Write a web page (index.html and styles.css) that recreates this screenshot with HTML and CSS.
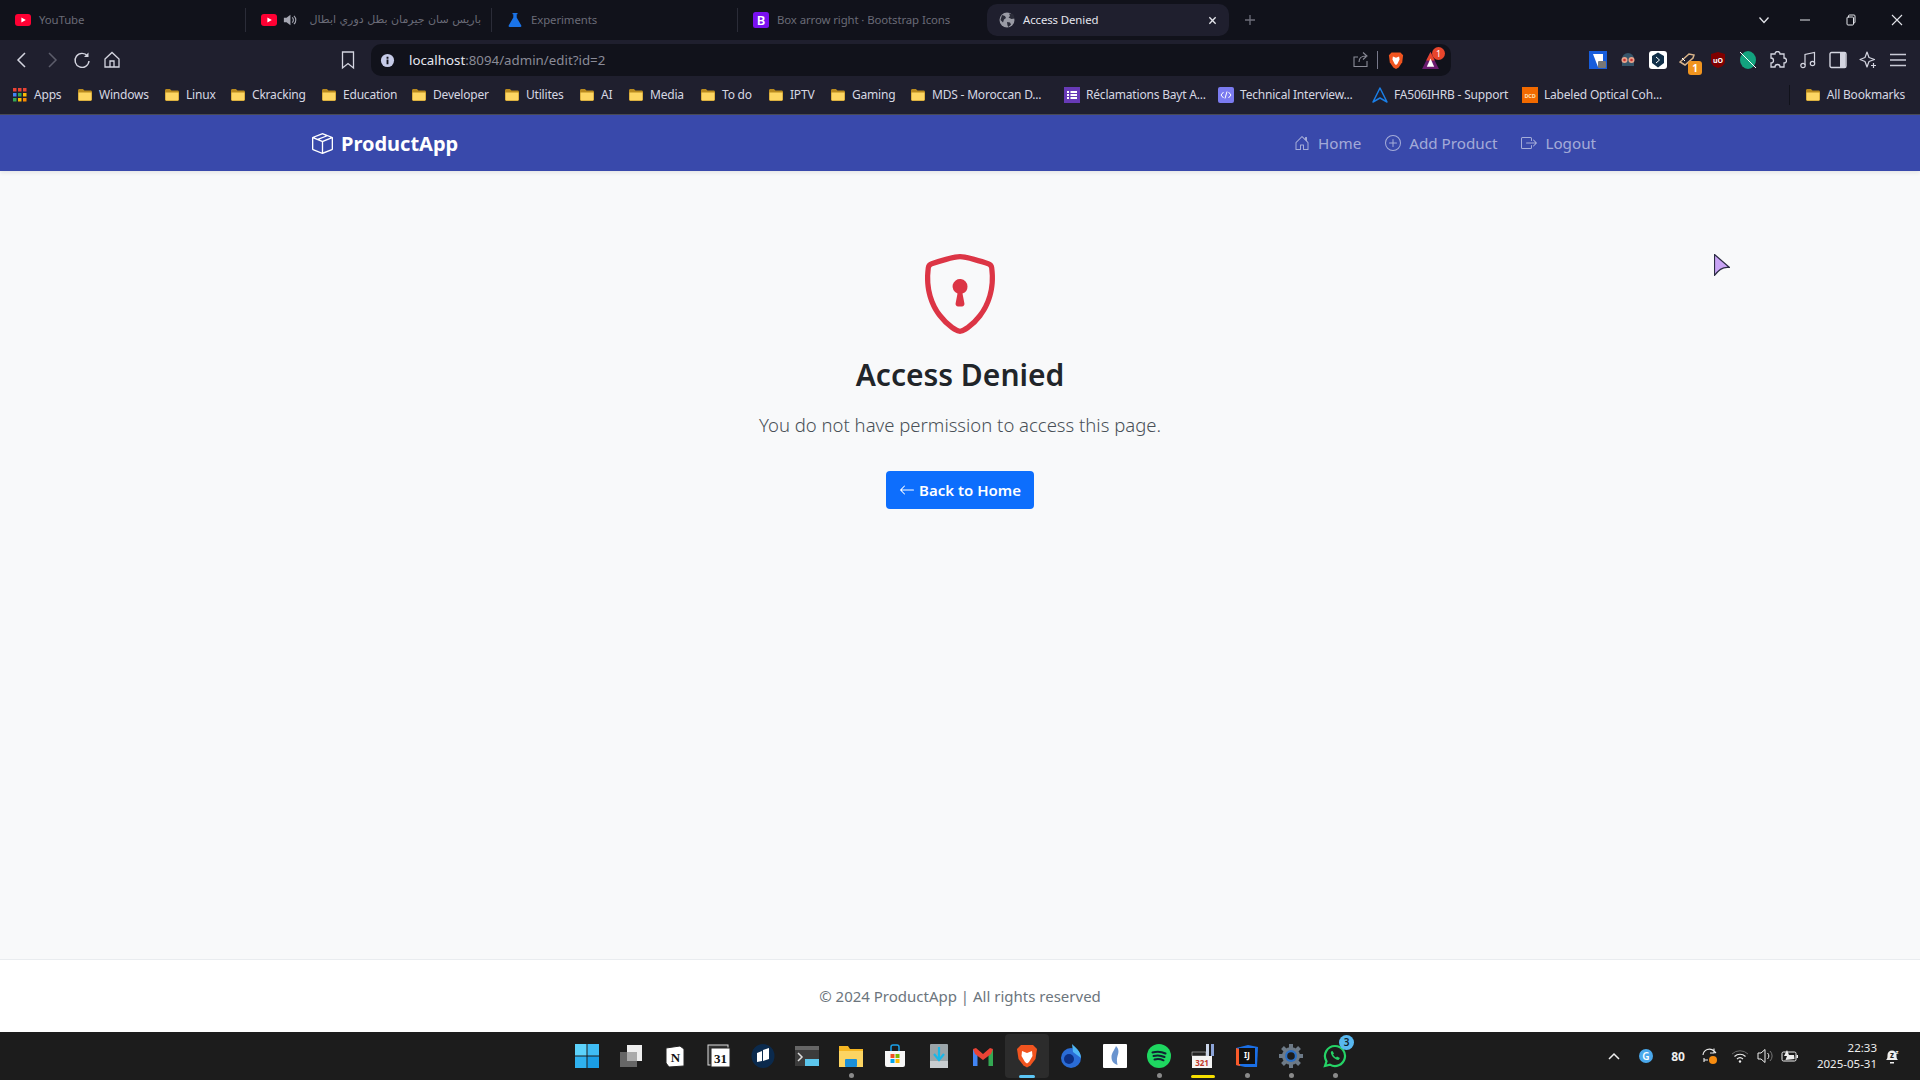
FILE: index.html
```html
<!DOCTYPE html>
<html lang="en">
<head>
    <meta charset="UTF-8">
    <title>Access Denied</title>
    <link rel="stylesheet" href="styles.css">
</head>
<body>
    <svg class="defs" width="0" height="0">
        <symbol id="folder" viewBox="0 0 16 16">
            <path d="M1 3.5C1 2.7 1.6 2 2.4 2h3.5l1.6 1.6h6.1c.8 0 1.400.7 1.400 1.400v7.600c0 .8-.6 1.400-1.400 1.400H2.400c-.8 0-1.400-.6-1.400-1.400z" fill="#b98a1e"/>
            <path d="M1.500 5.400h13v7.200c0 .6-.4 1-1 1h-11c-.6 0-1-.4-1-1z" fill="#fdd663"/>
        </symbol>
        <symbol id="yt" viewBox="0 0 16 16">
            <rect y="2" width="16" height="12" rx="3" fill="#ff0033"/>
            <path d="M6.400 5.400v5.200L10.800 8z" fill="#fff"/>
        </symbol>
    </svg>

    <!-- Browser window top -->
    <div class="tabstrip">
        <div class="tab sep"><svg class="fav"><use href="#yt"/></svg><span class="tab-title">YouTube</span></div>
        <div class="tab sep">
            <svg class="fav"><use href="#yt"/></svg>
            <svg class="speaker" viewBox="0 0 16 16"><path d="M1 5.500h3L8.500 2v12L4 10.500H1z" fill="#a5a6b2"/><path d="M10.500 5a4 4 0 0 1 0 6M12.500 3.200a6.500 6.500 0 0 1 0 9.600" stroke="#a5a6b2" stroke-width="1.300" fill="none"/></svg>
            <span class="tab-title arabic" dir="rtl">باريس سان جيرمان بطل دوري ابطال</span>
        </div>
        <div class="tab sep">
            <svg class="fav" viewBox="0 0 16 16"><path d="M5.500 1h5v1.200H9.700v3.400l4.600 8c.3.6-.1 1.400-.8 1.400H2.500c-.7 0-1.100-.8-.8-1.400l4.600-8V2.200h-.8z" fill="#1a73e8"/></svg>
            <span class="tab-title">Experiments</span>
        </div>
        <div class="tab">
            <svg class="fav" viewBox="0 0 16 16"><rect width="16" height="16" y="0" rx="2.500" fill="#7a10f0"/><text x="8" y="12.600" class="fav-letter">B</text></svg>
            <span class="tab-title">Box arrow right · Bootstrap Icons</span>
        </div>
        <div class="tab active">
            <svg class="fav" viewBox="0 0 16 16"><circle cx="8" cy="8" r="7.500" fill="#9a9ba5"/><path d="M3 3l3 1 1 2-2 1.500-1 3-2.500-2.500zM10 1.500l1 2.500-1.500 1.500 3 1.500 3-.5-1-4zM8 10l3 .5 1 2-2.500 2.500-1-1.500z" fill="#2a2b38"/></svg>
            <span class="tab-title">Access Denied</span>
            <svg class="tab-close" viewBox="0 0 10 10"><path d="M1.500 1.500l7 7M8.500 1.500l-7 7" stroke="#e3e4ea" stroke-width="1.500"/></svg>
        </div>
        <svg class="new-tab" viewBox="0 0 12 12"><path d="M6 1v10M1 6h10" stroke="#6d6e7a" stroke-width="1.300"/></svg>
        <div class="window-btns">
            <svg class="win-chevron" viewBox="0 0 12 12"><path d="M1.500 3.500L6 8.500l4.500-5" stroke="#e3e4ea" stroke-width="1.300" fill="none"/></svg>
            <svg class="win-btn" viewBox="0 0 12 12"><path d="M1 6h10" stroke="#e3e4ea" stroke-width="1"/></svg>
            <svg class="win-btn" viewBox="0 0 12 12"><path d="M3.500 3.500V2a1 1 0 0 1 1-1H9a1 1 0 0 1 1 1v6a1 1 0 0 1-1 1H8.500" stroke="#e3e4ea" fill="none"/><rect x="2" y="3" width="6.500" height="8" rx="1" stroke="#e3e4ea" fill="none"/></svg>
            <svg class="win-btn" viewBox="0 0 12 12"><path d="M1 1l10 10M11 1L1 11" stroke="#e3e4ea" stroke-width="1.100"/></svg>
        </div>
    </div>

    <div class="toolbar">
        <button class="tb-btn"><svg viewBox="0 0 20 20"><path d="M13 3l-7 7 7 7" stroke="#d4d5e0" stroke-width="1.500" fill="none"/></svg></button>
        <button class="tb-btn"><svg viewBox="0 0 20 20"><path d="M7 3l7 7-7 7" stroke="#5c5d6b" stroke-width="1.500" fill="none"/></svg></button>
        <button class="tb-btn"><svg viewBox="0 0 20 20"><path d="M15.500 6A7 7 0 1 0 17 11" stroke="#d4d5e0" stroke-width="1.400" fill="none"/><path d="M16.500 2.500V7H12z" fill="#d4d5e0"/></svg></button>
        <button class="tb-btn"><svg viewBox="0 0 20 20"><path d="M3 9l7-6.500L17 9v8H3zM8 17v-6h4v6" stroke="#d4d5e0" stroke-width="1.300" fill="none"/></svg></button>
        <svg class="bookmark-star" viewBox="0 0 16 20"><path d="M2.500 2h11v16L8 13.500 2.500 18z" stroke="#d4d5e0" stroke-width="1.300" fill="none"/></svg>
        <div class="urlbar">
            <svg class="url-info" viewBox="0 0 16 16"><circle cx="8" cy="8" r="7" fill="#c6cbe8"/><path d="M7 7h2v5H7zM7 4h2v2H7z" fill="#11121b"/></svg>
            <span class="url-host">localhost</span><span class="url-rest">:8094/admin/edit?id=2</span>
            <svg class="url-share" viewBox="0 0 18 18"><path d="M15 10v5.500H2V6h4M7 11c0-4 3-6 7-6M11 1.500L15 5l-4 3.500" stroke="#8a8b97" stroke-width="1.100" fill="none"/></svg>
            <span class="url-sep"></span>
            <svg class="url-lion" viewBox="0 0 18 20"><path d="M4 1h10l3 3-1 8-4 6-3 1.500-3-1.500-4-6L1 4z" fill="#f1541f"/><path d="M5.500 5.500L9 7l3.500-1.500L13 9l-2.500 5L9 15l-1.500-1L5 9z" fill="#fff"/></svg>
            <div class="url-rewards">
                <svg viewBox="0 0 18 18"><path d="M9 1l8 16H1z" fill="#6a1b6f"/><path d="M9 1l4 8H5z" fill="#e8452c"/><path d="M9 7l3.500 8h-7z" fill="#fff"/></svg>
                <span class="rewards-badge">1</span>
            </div>
        </div>
        <div class="extensions">
            <div class="ext"><svg viewBox="0 0 18 18"><rect width="18" height="18" fill="#175ddc"/><path d="M4 3h10v7c0 3-3 5-5 6z" fill="#fff"/><rect x="9" y="10" width="8" height="7" rx="1" fill="#777"/></svg></div>
            <div class="ext"><svg viewBox="0 0 18 18"><path d="M3 8a6 6 0 0 1 12 0v7H3z" fill="#36556a"/><circle cx="5.500" cy="9" r="3" fill="#e8a48b"/><circle cx="12.500" cy="9" r="3" fill="#e8a48b"/><circle cx="5.500" cy="9" r="1.300" fill="#c33"/><circle cx="12.500" cy="9" r="1.300" fill="#c33"/></svg></div>
            <div class="ext"><svg viewBox="0 0 18 18"><rect width="18" height="18" rx="3" fill="#fff"/><path d="M9 1.500l6 3.500v7l-6 4.500L3 12V5z" fill="#123049"/><path d="M7 6l3.500 3L7 12" stroke="#fff" fill="none"/></svg></div>
            <div class="ext"><svg viewBox="0 0 18 18"><path d="M1 11L10 3l5 1-1 3-8 7z" stroke="#d9b48a" stroke-width="1.500" fill="none"/><path d="M3 7l3 3" stroke="#fff"/></svg><span class="ext-badge">1</span></div>
            <div class="ext"><svg viewBox="0 0 18 18"><path d="M9 1l7 2v7c0 4-4 6-7 7-3-1-7-3-7-7V3z" fill="#800000"/><text x="9" y="11.500" class="ublock-text">uO</text></svg></div>
            <div class="ext"><svg viewBox="0 0 18 18"><ellipse cx="9" cy="9" rx="8" ry="9" fill="#13a37f"/><path d="M1 1l16 16" stroke="#fff"/></svg></div>
            <div class="ext"><svg viewBox="0 0 18 18"><path d="M6 3a2.500 2.500 0 0 1 5 0h4v4a2.500 2.500 0 0 1 0 5v4h-4a2.500 2.500 0 0 0-5 0H2v-4a2.500 2.500 0 0 0 0-5V3z" stroke="#d4d5e0" stroke-width="1.300" fill="none"/></svg></div>
            <div class="ext"><svg viewBox="0 0 18 18"><path d="M6 14V3.500L15.500 1.500V12" stroke="#d4d5e0" stroke-width="1.200" fill="none"/><circle cx="4" cy="14.500" r="2.200" stroke="#d4d5e0" stroke-width="1.200" fill="none"/><circle cx="13.500" cy="12.500" r="2.200" stroke="#d4d5e0" stroke-width="1.200" fill="none"/></svg></div>
            <div class="ext"><svg viewBox="0 0 18 18"><rect x="1" y="1.500" width="16" height="15" rx="1.500" stroke="#d4d5e0" stroke-width="1.400" fill="none"/><rect x="11" y="2" width="5.500" height="14" fill="#d4d5e0"/></svg></div>
            <div class="ext"><svg viewBox="0 0 18 18"><path d="M8 1l2 5.500 5.500 2L10 10.500 8 16l-2-5.500L1 8.500l5-2z" stroke="#d4d5e0" stroke-width="1.200" fill="none" stroke-linejoin="round"/><path d="M14.500 12v5M12 14.500h5" stroke="#d4d5e0" stroke-width="1.200"/></svg></div>
            <div class="ext"><svg viewBox="0 0 18 18"><path d="M1 3.500h16M1 9h16M1 14.500h16" stroke="#c9cad6" stroke-width="1.400"/></svg></div>
        </div>
    </div>

    <div class="bookmarks">
        <div class="bm">
            <svg class="bm-icon apps" viewBox="0 0 14 14"><rect width="3.500" height="3.500" fill="#ea4335"/><rect x="5" width="3.500" height="3.500" fill="#ea4335"/><rect x="10" width="3.500" height="3.500" fill="#ea4335"/><rect y="5" width="3.500" height="3.500" fill="#4285f4"/><rect x="5" y="5" width="3.500" height="3.500" fill="#34a853"/><rect x="10" y="5" width="3.500" height="3.500" fill="#fbbc05"/><rect y="10" width="3.500" height="3.500" fill="#34a853"/><rect x="5" y="10" width="3.500" height="3.500" fill="#fbbc05"/><rect x="10" y="10" width="3.500" height="3.500" fill="#fb8c00"/></svg>
            Apps
        </div>
        <div class="bm"><svg class="bm-icon"><use href="#folder"/></svg>Windows</div>
        <div class="bm"><svg class="bm-icon"><use href="#folder"/></svg>Linux</div>
        <div class="bm"><svg class="bm-icon"><use href="#folder"/></svg>Ckracking</div>
        <div class="bm"><svg class="bm-icon"><use href="#folder"/></svg>Education</div>
        <div class="bm"><svg class="bm-icon"><use href="#folder"/></svg>Developer</div>
        <div class="bm"><svg class="bm-icon"><use href="#folder"/></svg>Utilites</div>
        <div class="bm"><svg class="bm-icon"><use href="#folder"/></svg>AI</div>
        <div class="bm"><svg class="bm-icon"><use href="#folder"/></svg>Media</div>
        <div class="bm"><svg class="bm-icon"><use href="#folder"/></svg>To do</div>
        <div class="bm"><svg class="bm-icon"><use href="#folder"/></svg>IPTV</div>
        <div class="bm"><svg class="bm-icon"><use href="#folder"/></svg>Gaming</div>
        <div class="bm"><svg class="bm-icon"><use href="#folder"/></svg>MDS - Moroccan D...</div>
        <div class="bm"><svg class="bm-icon" viewBox="0 0 16 16"><rect width="16" height="16" fill="#673ab7"/><path d="M3 4h2v2H3zM6.500 4H13v2H6.500zM3 7h2v2H3zM6.500 7H13v2H6.500zM3 10h2v2H3zM6.500 10H13v2H6.500z" fill="#fff"/></svg>Réclamations Bayt A...</div>
        <div class="bm"><svg class="bm-icon" viewBox="0 0 16 16"><rect width="16" height="16" rx="2" fill="#7b7bf0"/><path d="M5.500 5L3 8l2.500 3M10.500 5L13 8l-2.500 3M9 4.500l-2 7" stroke="#fff" fill="none"/></svg>Technical Interview...</div>
        <div class="bm"><svg class="bm-icon" viewBox="0 0 16 16"><path d="M8 1L1 15l7-4 7 4z" stroke="#1a7ee6" stroke-width="1.500" fill="none" stroke-linejoin="round"/></svg>FA506IHRB - Support</div>
        <div class="bm"><svg class="bm-icon" viewBox="0 0 16 16"><rect width="16" height="16" fill="#f26a00"/><text x="8" y="10.500" class="dcd-text">DCD</text></svg>Labeled Optical Coh...</div>
        <div class="bm all-bookmarks"><svg class="bm-icon"><use href="#folder"/></svg>All Bookmarks</div>
    </div>

    <!-- Page content -->
    <nav class="navbar">
        <div class="container nav-inner">
            <a class="brand">
                <svg class="bi brand-icon" viewBox="0 0 16 16"><path d="M8.186 1.113a.5.5 0 0 0-.372 0L1.846 3.500l2.404.961L10.404 2l-2.218-.887zm3.564 1.426L5.596 5 8 5.961 14.154 3.500l-2.404-.961zm3.250 1.700-6.500 2.600v7.922l6.500-2.600V4.240zM7.500 14.762V6.838L1 4.239v7.925l6.500 2.600zM7.443.184a1.500 1.500 0 0 1 1.114 0l7.129 2.852A.5.5 0 0 1 16 3.500v8.662a1 1 0 0 1-.629.928l-7.185 2.874a.5.5 0 0 1-.372 0L.63 13.090a1 1 0 0 1-.63-.928V3.500a.5.5 0 0 1 .314-.464L7.443.184z"/></svg>
                ProductApp
            </a>
            <div class="nav-links">
                <a class="nav-link"><svg class="bi" viewBox="0 0 16 16"><path d="M8.354 1.146a.5.5 0 0 0-.708 0l-6 6A.5.5 0 0 0 1.500 7.500v7a.5.5 0 0 0 .5.5h4.500a.5.5 0 0 0 .5-.5v-4h2v4a.5.5 0 0 0 .5.5H14a.5.5 0 0 0 .5-.5v-7a.5.5 0 0 0-.146-.354L13 5.793V2.500a.5.5 0 0 0-.5-.5h-1a.5.5 0 0 0-.5.5v1.293L8.354 1.146zM2.500 14V7.707l5.500-5.500 5.500 5.500V14H10v-4a.5.5 0 0 0-.5-.5h-3a.5.5 0 0 0-.5.5v4H2.500z"/></svg>Home</a>
                <a class="nav-link"><svg class="bi" viewBox="0 0 16 16"><path d="M8 15A7 7 0 1 1 8 1a7 7 0 0 1 0 14zm0 1A8 8 0 1 0 8 0a8 8 0 0 0 0 16z"/><path d="M8 4a.5.5 0 0 1 .5.5v3h3a.5.5 0 0 1 0 1h-3v3a.5.5 0 0 1-1 0v-3h-3a.5.5 0 0 1 0-1h3v-3A.5.5 0 0 1 8 4z"/></svg>Add Product</a>
                <a class="nav-link"><svg class="bi" viewBox="0 0 16 16"><path d="M10 12.500a.5.5 0 0 1-.5.5h-8a.5.5 0 0 1-.5-.5v-9a.5.5 0 0 1 .5-.5h8a.5.5 0 0 1 .5.5v2a.5.5 0 0 0 1 0v-2A1.500 1.500 0 0 0 9.500 2h-8A1.500 1.500 0 0 0 0 3.500v9A1.500 1.500 0 0 0 1.500 14h8a1.500 1.500 0 0 0 1.500-1.500v-2a.5.5 0 0 0-1 0v2z"/><path d="M15.854 8.354a.5.5 0 0 0 0-.708l-3-3a.5.5 0 0 0-.708.708L14.293 7.500H5.500a.5.5 0 0 0 0 1h8.793l-2.147 2.146a.5.5 0 0 0 .708.708l3-3z"/></svg>Logout</a>
            </div>
        </div>
    </nav>

    <main class="main">
        <svg class="shield" viewBox="0 0 16 16"><path d="M5.338 1.590a61.440 61.440 0 0 0-2.837.856.481.481 0 0 0-.328.390c-.554 4.157.726 7.190 2.253 9.188a10.725 10.725 0 0 0 2.287 2.233c.346.244.652.420.893.533.120.057.218.095.293.118a.550.550 0 0 0 .101.025.615.615 0 0 0 .100-.025c.076-.023.174-.061.294-.118.240-.113.547-.290.893-.533a10.726 10.726 0 0 0 2.287-2.233c1.527-1.997 2.807-5.031 2.253-9.188a.480.480 0 0 0-.328-.390c-.651-.213-1.750-.560-2.837-.855C9.552 1.290 8.531 1.067 8 1.067c-.530 0-1.552.223-2.662.524zM5.072.560C6.157.265 7.310 0 8 0s1.843.265 2.928.560c1.110.300 2.229.655 2.887.870a1.540 1.540 0 0 1 1.044 1.262c.596 4.477-.787 7.795-2.465 9.990a11.775 11.775 0 0 1-2.517 2.453 7.159 7.159 0 0 1-1.048.625c-.280.132-.581.240-.829.240s-.548-.108-.829-.240a7.158 7.158 0 0 1-1.048-.625 11.777 11.777 0 0 1-2.517-2.453C1.928 10.487.545 7.169 1.141 2.692A1.540 1.540 0 0 1 2.185 1.430 62.456 62.456 0 0 1 5.072.560z"/><path d="M9.500 6.500a1.500 1.500 0 0 1-1 1.415l.385 1.990a.5.5 0 0 1-.491.595h-.788a.5.5 0 0 1-.490-.595l.384-1.990a1.500 1.500 0 1 1 2-1.415z"/></svg>
        <h1 class="title">Access Denied</h1>
        <p class="lead">You do not have permission to access this page.</p>
        <a class="btn-home"><svg class="bi" viewBox="0 0 16 16"><path d="M15 8a.5.5 0 0 0-.5-.5H2.707l3.147-3.146a.5.5 0 1 0-.708-.708l-4 4a.5.5 0 0 0 0 .708l4 4a.5.5 0 0 0 .708-.708L2.707 8.500H14.500A.5.5 0 0 0 15 8z"/></svg>Back to Home</a>
    </main>

    <footer class="footer">© 2024 ProductApp | All rights reserved</footer>

    <!-- Windows taskbar -->
    <div class="taskbar">
        <div class="task-icons">
            <div class="task"><svg viewBox="0 0 24 24"><rect x="0" y="0" width="11.500" height="11.500" fill="#5cd2fb"/><rect x="12.500" y="0" width="11.500" height="11.500" fill="#3fbcf4"/><rect x="0" y="12.500" width="11.500" height="11.500" fill="#2fb1ef"/><rect x="12.500" y="12.500" width="11.500" height="11.500" fill="#1a9ee6"/></svg></div>
            <div class="task"><svg viewBox="0 0 24 24"><rect x="8" y="1" width="15" height="16" fill="#eee"/><rect x="1" y="8" width="17" height="15" fill="#666"/><rect x="8" y="8" width="10" height="9" fill="#aaa"/></svg></div>
            <div class="task"><svg viewBox="0 0 24 24"><path d="M3 4l14-2 4 3v17l-15 1-3-4z" fill="#fff" stroke="#222"/><text x="12.500" y="18" class="task-letter">N</text></svg></div>
            <div class="task"><svg viewBox="0 0 24 24"><rect x="1" y="1" width="20" height="20" fill="#333" stroke="#ddd"/><rect x="4" y="4" width="19" height="19" fill="#fff" stroke="#222"/><text x="13.500" y="19" class="task-letter">31</text></svg></div>
            <div class="task"><svg viewBox="0 0 24 24"><ellipse cx="12" cy="12" rx="11.500" ry="12" fill="#0b2a4d"/><path d="M6 9l5-2v10l-5 1zM12 6l6-2v11l-6 2z" fill="#fff"/></svg></div>
            <div class="task"><svg viewBox="0 0 24 24"><rect y="2" width="24" height="20" fill="#3c3c3c"/><rect y="2" width="24" height="4" fill="#666"/><path d="M3 9l4 4-4 4" stroke="#ddd" stroke-width="1.500" fill="none"/><rect x="10" y="15" width="14" height="7" fill="#5cc6ec"/></svg></div>
            <div class="task"><svg viewBox="0 0 24 24"><path d="M0 2h9l2 3h13v18H0z" fill="#f5b622"/><path d="M0 7h24v16H0z" fill="#fcd462"/><rect x="6" y="15" width="12" height="8" rx="1" fill="#1a8fd8"/></svg><span class="dot"></span></div>
            <div class="task"><svg viewBox="0 0 24 24"><path d="M2 7h20v14a2 2 0 0 1-2 2H4a2 2 0 0 1-2-2z" fill="#f6f6f6"/><path d="M8 7V3a2 2 0 0 1 2-2h4a2 2 0 0 1 2 2v4" stroke="#1aa0e8" stroke-width="1.500" fill="none"/><rect x="7.500" y="10" width="4" height="4" fill="#f25022"/><rect x="12.500" y="10" width="4" height="4" fill="#7fba00"/><rect x="7.500" y="15" width="4" height="4" fill="#00a4ef"/><rect x="12.500" y="15" width="4" height="4" fill="#ffb900"/></svg></div>
            <div class="task"><svg viewBox="0 0 24 24"><rect x="3" y="0" width="18" height="24" rx="1" fill="#9aa4a8"/><rect x="3" y="17" width="18" height="7" fill="#c8cdd0"/><path d="M12 3v12M7 10l5 6 5-6" stroke="#19b7e8" stroke-width="2.200" fill="none"/></svg></div>
            <div class="task"><svg viewBox="0 0 24 24"><path d="M2 5v17h4.500V10z" fill="#4285f4"/><path d="M22 5v17h-4.500V10z" fill="#34a853"/><path d="M2 5l3-1 7 6 7-6 3 1-2 5-8 6-8-6z" fill="#ea4335"/></svg></div>
            <div class="task task-active"><svg viewBox="0 0 24 24"><path d="M6 1h12l4 4-1.500 10-5 6.500-3.500 2-3.500-2-5-6.500L2 5z" fill="#f1541f"/><path d="M7 7l5 2 5-2 .5 5-3.500 6-2 1.500L10 18l-3.500-6z" fill="#fff"/></svg><span class="bar-blue"></span></div>
            <div class="task"><svg viewBox="0 0 24 24"><circle cx="12" cy="14" r="10" fill="#2a6cd6"/><circle cx="10" cy="15" r="5" fill="#0c2f83"/><path d="M13 0c3 3 9 7 9 14L14 8z" fill="#4fb6f5"/></svg></div>
            <div class="task"><svg viewBox="0 0 24 24"><rect width="24" height="24" rx="1" fill="#fff"/><path d="M13 2c3 3 3 6 1.500 10-1 3-.5 6 0 9-3-1-6-3-6-8 0-4 3-7 4.500-11z" fill="#6a94cf"/></svg></div>
            <div class="task"><svg viewBox="0 0 24 24"><circle cx="12" cy="12" r="12" fill="#1ed760"/><path d="M5.500 8.500c4-1.200 9-1 13 1M6.500 12c3.500-1 7.500-.7 11 1M7.500 15.500c3-.7 6-.5 9 .8" stroke="#123" stroke-width="2" fill="none" stroke-linecap="round"/></svg><span class="dot"></span></div>
            <div class="task"><svg viewBox="0 0 24 24"><rect x="15" y="0" width="3" height="12" fill="#c9d4e8"/><rect x="20" y="0" width="3" height="12" fill="#8ca4d8"/><rect x="1" y="8" width="14" height="4" fill="#222" stroke="#ddd" stroke-width=".5"/><rect x="1" y="12" width="20" height="12" fill="#f4f4f4"/><text x="11" y="22" class="task-num">321</text></svg><span class="bar-yellow"></span></div>
            <div class="task"><svg viewBox="0 0 24 24"><path d="M1 4l12-3 10 2-1 20H10l-9-2z" fill="#1a6fe6"/><path d="M1 4l6 2-2 16-4-1z" fill="#fa5b2a"/><rect x="4" y="4" width="16" height="16" fill="#111"/><text x="12" y="14" class="task-ij">IJ</text></svg><span class="dot"></span></div>
            <div class="task"><svg viewBox="0 0 24 24"><circle cx="12" cy="12" r="9" fill="#6d7a87"/><path d="M12 0v24M0 12h24M3.500 3.500l17 17M20.500 3.500l-17 17" stroke="#6d7a87" stroke-width="4"/><circle cx="12" cy="12" r="6" fill="#2b6fc4"/><circle cx="12" cy="12" r="3.800" fill="#1c1c1c"/></svg><span class="dot"></span></div>
            <div class="task"><svg viewBox="0 0 24 24"><path d="M12 2a10 10 0 0 0-8.500 15.300L2 22l4.900-1.400A10 10 0 1 0 12 2z" stroke="#25d366" stroke-width="2.200" fill="none"/><path d="M8 7.500c-1 3 3.500 8.500 7.500 8.500l1.500-2-3-1.500-1 1c-1-.5-2.500-2-3-3l1-1L9.500 7z" fill="#25d366"/></svg><span class="task-badge">3</span><span class="dot"></span></div>
        </div>
        <div class="tray">
            <div class="tray-item"><svg viewBox="0 0 14 10" class="tray-chevron"><path d="M2 8l5-5 5 5" stroke="#eee" stroke-width="1.500" fill="none"/></svg></div>
            <div class="tray-item"><span class="tray-g">G</span></div>
            <div class="tray-item tray-num">80</div>
            <div class="tray-item"><svg viewBox="0 0 18 18" class="tray-icon"><path d="M2 8a6.500 6.500 0 0 1 11-4l2 2M13 1.500V6H9M3 13h4M3 11v4" stroke="#eee" stroke-width="1.100" fill="none"/><circle cx="12" cy="13" r="4" fill="#f78c10"/></svg></div>
            <div class="tray-item wifi"><svg viewBox="0 0 18 14" class="tray-icon"><path d="M1 5a11.500 11.500 0 0 1 16 0" stroke="#666" fill="none"/><path d="M3.500 7.500a8 8 0 0 1 11 0M6 10a4.500 4.500 0 0 1 6 0" stroke="#eee" stroke-width="1.100" fill="none"/><circle cx="9" cy="12.500" r="1.200" fill="#eee"/></svg></div>
            <div class="tray-item speaker-item"><svg viewBox="0 0 18 16" class="tray-icon"><path d="M1 5h3l4-3.500v13L4 11H1z" stroke="#eee" fill="none"/><path d="M10.500 5a4 4 0 0 1 0 6" stroke="#eee" fill="none"/><path d="M13 3a7 7 0 0 1 0 10" stroke="#777" fill="none"/></svg></div>
            <div class="tray-item speaker-item"><svg viewBox="0 0 18 14" class="tray-icon"><rect x="1" y="3" width="14" height="9" rx="1.500" stroke="#eee" fill="none"/><rect x="15.500" y="6" width="1.500" height="3" fill="#eee"/><path d="M6 1L3 7h3l-1.500 4 9-1-.5-4H8z" fill="#eee"/></svg></div>
            <div class="clock"><div>22:33</div><div>2025-05-31</div></div>
            <div class="tray-item bell"><svg viewBox="0 0 18 18" class="tray-icon"><path d="M3 13c1.500-1 1.500-3 1.500-5a4.500 4.500 0 0 1 9 0c0 2 0 4 1.500 5zM7 15h4v1.500H7z" fill="#eee"/><text x="9" y="11" class="bell-z">z</text><text x="14" y="6.500" class="bell-zz">z</text></svg></div>
        </div>
    </div>

    <svg class="cursor" viewBox="0 0 16 22"><path d="M.5.500L15.500 13.500C10 12.500 5 15 .5 21.500z" fill="#c9a4f5" stroke="#2c2c44" stroke-width="1.200" stroke-linejoin="round"/></svg>
</body>
</html>
```

FILE: styles.css
```css
/* Reset and page frame */
* {
    box-sizing: border-box;
}
html, body {
    margin: 0;
    height: 100%;
}
body {
    width: 1920px;
    height: 1080px;
    overflow: hidden;
    display: flex;
    flex-direction: column;
    position: relative;
    font-family: "Noto Sans", "Open Sans", sans-serif;
    background-color: #f8f9fa;
}
.defs {
    position: absolute;
}

/* Tab strip */
.tabstrip {
    height: 40px;
    flex-shrink: 0;
    display: flex;
    align-items: center;
    background-color: #11121b;
    font-size: 11.4px;
    letter-spacing: -0.1px;
    color: #6a6b77;
}
.tab {
    width: 246px;
    height: 24px;
    padding-left: 15px;
    display: flex;
    align-items: center;
    gap: 8px;
    white-space: nowrap;
    overflow: hidden;
}
.tab-title {
    margin-bottom: 2px;
}
.tab.sep {
    border-right: 1px solid #2b2c38;
}
.tab.active {
    width: 242px;
    height: 32px;
    margin-left: 3px;
    padding: 0 12px;
    background-color: #1f1f2e;
    border-radius: 10px;
    color: #e3e4ec;
}
.fav {
    width: 16px;
    height: 16px;
    flex-shrink: 0;
}
.fav-letter {
    font-size: 13px;
    font-weight: 600;
    fill: #fff;
    text-anchor: middle;
}
.speaker {
    width: 14px;
    height: 14px;
    margin-left: -2px;
    flex-shrink: 0;
}
.arabic {
    width: 176px;
    font-family: "DejaVu Sans", sans-serif;
    font-size: 11px;
    letter-spacing: 0;
}
.tab-close {
    width: 9px;
    height: 9px;
    margin-left: auto;
}
.new-tab {
    width: 12px;
    height: 12px;
    margin-left: 15px;
}
.window-btns {
    margin-left: auto;
    display: flex;
    align-items: center;
}
.win-chevron {
    width: 12px;
    height: 12px;
    margin-right: 29px;
}
.win-btn {
    width: 12px;
    height: 12px;
    margin-right: 34px;
}
.win-btn:last-child {
    margin-right: 17px;
}

/* Toolbar */
.toolbar {
    height: 37px;
    flex-shrink: 0;
    display: flex;
    padding: 4px 0 0 7px;
    background-color: #1f1f2e;
    position: relative;
    z-index: 1;
}
.tb-btn {
    width: 30px;
    height: 32px;
    padding: 0;
    border: 0;
    background: none;
    display: flex;
    align-items: center;
    justify-content: center;
}
.tb-btn svg {
    width: 20px;
    height: 20px;
}
.bookmark-star {
    width: 16px;
    height: 20px;
    margin: 6px 15px 0 213px;
}
.urlbar {
    width: 1080px;
    height: 32px;
    display: flex;
    align-items: center;
    padding: 0 8px 0 9px;
    background-color: #11121b;
    border-radius: 10px;
    font-size: 13.3px;
}
.url-info {
    width: 15px;
    height: 15px;
    margin-right: 14px;
}
.url-host {
    color: #e6e7f0;
}
.url-rest {
    color: #8a8b97;
}
.url-share {
    width: 18px;
    height: 18px;
    margin-left: auto;
}
.url-sep {
    width: 1px;
    height: 18px;
    margin: 0 10px 0 7px;
    background-color: #77788a;
}
.url-lion {
    width: 16px;
    height: 19px;
}
.url-rewards {
    position: relative;
    margin-left: 17px;
    margin-right: 3px;
    width: 19px;
    height: 19px;
}
.url-rewards svg {
    width: 19px;
    height: 19px;
    display: block;
}
.rewards-badge {
    position: absolute;
    top: -4px;
    right: -5px;
    width: 13px;
    height: 13px;
    border-radius: 50%;
    background-color: #e8452c;
    color: #fff;
    font-size: 9px;
    line-height: 13px;
    text-align: center;
}
.extensions {
    margin-left: 132px;
    display: flex;
    height: 32px;
}
.ext {
    width: 30px;
    height: 32px;
    display: flex;
    align-items: center;
    justify-content: center;
    position: relative;
}
.ext svg {
    width: 18px;
    height: 18px;
}
.ext-badge {
    position: absolute;
    left: 15px;
    top: 17px;
    width: 14px;
    height: 14px;
    border-radius: 3px;
    background-color: #f0941f;
    color: #fff;
    font-size: 10px;
    font-weight: 700;
    line-height: 14px;
    text-align: center;
}
.ublock-text {
    font-size: 7px;
    font-weight: 700;
    fill: #fff;
    text-anchor: middle;
}

/* Bookmarks bar */
.bookmarks {
    height: 38px;
    flex-shrink: 0;
    display: grid;
    grid-template-columns: 64px 87px 66px 91px 90px 93px 75px 49px 72px 68px 62px 80px 154px 154px 154px 150px auto 1fr;
    align-items: center;
    padding: 0 15px 2px 13px;
    background-color: #1f1f2e;
    border-bottom: 1px solid #4a4b55;
    font-size: 12px;
    letter-spacing: -0.2px;
    color: #d6d7e2;
    white-space: nowrap;
}
.bm {
    display: flex;
    align-items: center;
    gap: 6px;
}
.bm-icon {
    width: 16px;
    height: 16px;
    flex-shrink: 0;
}
.apps {
    width: 14px;
    height: 14px;
    margin-right: 1px;
}
.all-bookmarks {
    justify-self: end;
    padding-left: 15px;
    border-left: 1px solid #11121b;
    height: 20px;
}
.dcd-text {
    font-size: 5.5px;
    font-weight: 700;
    fill: #ffe0b0;
    text-anchor: middle;
}

/* Navbar */
.navbar {
    height: 56px;
    flex-shrink: 0;
    background-color: #3949ab;
    box-shadow: 0 2px 4px rgba(0, 0, 0, 0.08);
    position: relative;
}
.container {
    width: 1320px;
    margin: 0 auto;
    padding: 0 12px;
}
.nav-inner {
    height: 100%;
    display: flex;
    align-items: center;
    justify-content: space-between;
}
.brand {
    display: flex;
    align-items: center;
    gap: 8px;
    font-size: 20px;
    font-weight: 700;
    color: #fff;
}
.bi {
    width: 16px;
    height: 16px;
    fill: currentColor;
    flex-shrink: 0;
}
.brand-icon {
    width: 21px;
    height: 21px;
}
.nav-links {
    display: flex;
    gap: 24px;
    padding-right: 12px;
}
.nav-link {
    display: flex;
    align-items: center;
    gap: 8px;
    font-size: 15.2px;
    color: rgba(255, 255, 255, 0.55);
}

/* Access denied block */
.main {
    flex: 1;
    display: flex;
    flex-direction: column;
    align-items: center;
    padding-top: 83px;
}
.shield {
    width: 80px;
    height: 80px;
    fill: #dc3545;
}
.title {
    margin: 22px 0 0;
    font-size: 30px;
    line-height: 38px;
    font-weight: 600;
    color: #212529;
}
.lead {
    margin: 16px 0 0;
    font-size: 18.5px;
    line-height: 30px;
    font-weight: 300;
    color: #495057;
}
.btn-home {
    margin-top: 31px;
    width: 148px;
    height: 38px;
    display: flex;
    align-items: center;
    justify-content: center;
    gap: 4px;
    background-color: #0d6efd;
    border-radius: 4px;
    color: #fff;
    font-size: 15px;
    font-weight: 600;
}

/* Footer */
.footer {
    height: 73px;
    flex-shrink: 0;
    display: flex;
    align-items: center;
    justify-content: center;
    background-color: #fff;
    border-top: 1px solid #e9ecef;
    font-size: 15px;
    color: #6c757d;
}

/* Taskbar */
.taskbar {
    height: 48px;
    flex-shrink: 0;
    display: grid;
    grid-template-columns: 1fr auto 1fr;
    background-color: #1c1c1c;
}
.task-icons {
    grid-column: 2;
    display: flex;
    padding-left: 2px;
}
.task {
    width: 44px;
    height: 48px;
    display: flex;
    align-items: center;
    justify-content: center;
    position: relative;
}
.task svg {
    width: 24px;
    height: 24px;
}
.task-active {
    background-color: #2c2c2c;
    border-radius: 4px;
    height: 44px;
    margin-top: 2px;
}
.dot {
    position: absolute;
    bottom: 2px;
    left: 20px;
    width: 5px;
    height: 5px;
    border-radius: 50%;
    background-color: #8a8a8a;
}
.bar-blue {
    position: absolute;
    bottom: 0;
    left: 14px;
    width: 16px;
    height: 3px;
    border-radius: 2px;
    background-color: #5cc6f5;
}
.bar-yellow {
    position: absolute;
    bottom: 2px;
    left: 10px;
    width: 24px;
    height: 3px;
    border-radius: 2px;
    background-color: #f7e000;
}
.task-badge {
    position: absolute;
    top: 3px;
    right: 3px;
    width: 15px;
    height: 15px;
    border-radius: 50%;
    background-color: #58b8f0;
    color: #10202c;
    font-size: 10px;
    font-weight: 600;
    line-height: 15px;
    text-align: center;
}
.task-letter {
    font-family: "Liberation Serif", serif;
    font-size: 13px;
    font-weight: 700;
    text-anchor: middle;
    fill: #111;
}
.task-num {
    font-size: 8px;
    font-weight: 700;
    text-anchor: middle;
    fill: #c0392b;
}
.task-ij {
    font-size: 8px;
    font-weight: 700;
    text-anchor: middle;
    fill: #fff;
}
.tray {
    grid-column: 3;
    justify-self: end;
    display: flex;
    align-items: center;
    padding-right: 13px;
    color: #eee;
}
.tray-item {
    width: 32px;
    height: 48px;
    display: flex;
    align-items: center;
    justify-content: center;
}
.tray-item.wifi {
    width: 28px;
}
.tray-item.speaker-item {
    width: 24px;
}
.tray-item.bell {
    width: 30px;
}
.tray-chevron {
    width: 14px;
    height: 10px;
}
.tray-icon {
    width: 18px;
    height: 18px;
}
.tray-g {
    width: 14px;
    height: 14px;
    border-radius: 50%;
    background-color: #4aa8ec;
    color: #fff;
    font-size: 10px;
    font-weight: 600;
    line-height: 14px;
    text-align: center;
}
.tray-num {
    font-size: 12px;
    font-weight: 700;
}
.clock {
    width: 62px;
    margin-left: 13px;
    text-align: right;
    font-size: 11.5px;
    line-height: 16px;
    white-space: nowrap;
}
.bell-z {
    font-size: 8px;
    font-weight: 700;
    fill: #1c1c1c;
    text-anchor: middle;
}
.bell-zz {
    font-size: 6px;
    font-weight: 700;
    fill: #eee;
    text-anchor: middle;
}

/* Mouse pointer sits over the page */
.cursor {
    position: absolute;
    left: 1714px;
    top: 254px;
    width: 16px;
    height: 22px;
}
```
